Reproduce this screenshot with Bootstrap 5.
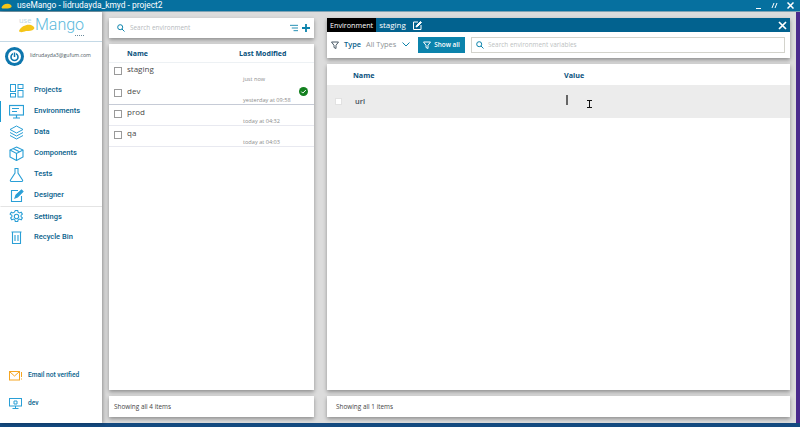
<!DOCTYPE html>
<html lang="en"><head><meta charset="utf-8">
<title>useMango</title>
<link rel="stylesheet" href="https://cdn.jsdelivr.net/npm/bootstrap@5.3.0/dist/css/bootstrap.min.css">
<style>
html,body{height:427px;overflow:hidden;}
body{background:#dcdcdc;font-family:"Open Sans","Noto Sans",sans-serif;color:#333;font-size:8px;}
.app-root{width:800px;height:427px;}
.title-bar{height:12px;background:#06709f;border-bottom:1px solid #7fa3b4;color:#fff;font-family:Roboto,sans-serif;font-size:8.4px;line-height:11px;padding-right:2px;flex:none;}
.title-logo{width:11px;height:6px;margin:0 5px 0 1px;}
.win-btn{width:16px;display:flex;align-items:center;justify-content:center;}
.win-btn svg{width:7px;height:7px;}
.mid-area{min-height:0;flex:1;}
.side-bar{width:102px;background:#fff;flex:none;box-shadow:1px 0 4px rgba(0,0,0,.35);z-index:1;}
.logo-box{height:30px;border-bottom:1px solid #c4d9e6;padding-left:19px;padding-bottom:4px;}
.logo-use{color:#bcd7e4;font-size:7.5px;line-height:8px;width:16px;height:17px;}
.logo-use svg{left:0;top:8px;}
.logo-word{color:#5bb9dc;font-family:Roboto,sans-serif;font-size:16px;line-height:18px;font-weight:300;position:relative;}
.logo-dots{position:absolute;right:0;bottom:-2px;width:9px;border-top:1px dotted #6a8a9c;}
.user-row{height:28px;font-size:5.2px;color:#4c5b64;padding-left:5px;gap:6px;margin-bottom:9.5px;}
.nav-row{height:21px;padding-left:8px;gap:10px;color:#07618c;font-family:Roboto,sans-serif;font-size:7.5px;font-weight:500;border-left:1px solid transparent;}
.nav-row svg{width:15px;height:15px;flex:none;}
.nav-on{border-left-color:#1a9ad0;}
.nav-split{border-top:1px solid #e4e4e4;}
.side-foot{height:21px;padding-left:9px;gap:6px;color:#07618c;font-family:Roboto,sans-serif;font-size:6.6px;font-weight:500;}
.side-gap{height:7px;}
.foot-last{margin-bottom:9px;}
.stage{padding:6px 10px 6px 7px;gap:13px;min-width:0;position:relative;}
.stage-end{width:4px;background:#4a2a8c;flex:none;}
.left-col{width:205px;flex:none;gap:6px;}
.right-col{width:463px;flex:none;gap:6px;}
.panel{background:#fff;box-shadow:0 2px 4px rgba(0,0,0,.35);}
.search-card{height:20px;padding:0 4px 0 8px;color:#b5b9bc;font-size:6.4px;}
.search-card svg{width:8px;height:8px;margin-right:5px;flex:none;}
.list-card{flex:1;min-height:0;}
.foot-card{height:21px;flex:none;padding-left:9px;font-size:6.4px;color:#444;}
.foot-tight{padding-left:5px;}
.list-head{height:19px;padding-top:2px;color:#07507c;font-size:7px;font-weight:700;border-bottom:1px solid #edf1f4;}
.head-name{padding-left:18px;width:130px;}
.env-row{height:21px;position:relative;color:#4a4a4a;font-size:8px;padding-top:1px;border-bottom:1px solid #e8e9f0;padding-left:5px;}
.env-first{padding-top:0;}
.env-line{border-bottom-color:#c6cbd6;}
.env-none{border-bottom-color:transparent;}
.tick-box{width:8px;height:8px;border:1px solid #9a9a9a;background:#fff;margin-right:5px;flex:none;margin-top:-1px;}
.env-date{position:absolute;left:134px;bottom:0;font-size:5.6px;color:#8c8c8c;}
.env-ok{position:absolute;right:6px;top:3px;width:9px;height:9px;}
.blue-head{height:14px;background:#02628f;color:#fff;font-size:8px;}
.black-tag{background:#000;height:14px;padding:0 3px;font-size:7.2px;line-height:14px;margin-right:3px;}
.edit-mark{width:9px;height:9px;margin-left:7px;}
.close-mark{width:9px;height:9px;margin-left:auto;margin-right:3px;}
.tool-row{height:26px;padding:0 4px;}
.tool-row svg.fun{width:8px;height:8px;flex:none;}
.type-lab{color:#07618c;font-size:7.4px;font-weight:600;margin-left:5px;}
.type-sel{color:#8d9296;font-size:7.4px;margin-left:5px;width:44px;margin-right:8px;}
.show-btn{background:#0b83ac;color:#fff;font-size:6.4px;font-weight:600;height:16px;width:47px;border-radius:0;padding:0;gap:3px;--bs-btn-color:#fff;--bs-btn-bg:#0b83ac;--bs-btn-border-color:#0b83ac;}
.search-wide{height:16px;flex:1;border:1px solid #d3d3cc;margin-left:6px;margin-right:1px;color:#bcbfc2;font-size:6.4px;padding-left:4px;}
.search-wide svg{width:8px;height:8px;margin-right:4px;}
.table-card{flex:1;min-height:0;}
.tab-head{height:21px;padding-top:1px;color:#07507c;font-size:7.2px;font-weight:700;}
.col-one{width:237px;padding-left:26px;flex:none;}
.tab-row{height:33px;background:#ececec;color:#3d4a55;font-size:7.4px;font-weight:600;position:relative;}
.tab-check{width:7px;height:7px;background:#fff;border:1px solid #e2e2e2;margin-left:8px;margin-right:13px;flex:none;}
.tab-name{width:211px;flex:none;}
.caret-bar{width:2px;height:10px;background:#666;margin-top:-3px;}
.i-beam{position:absolute;left:260px;top:15px;width:5px;height:8px;}
.base-strip{height:4px;background:#144a80;flex:none;}
</style></head>
<body>
<div class="app-root d-flex flex-column">
  <div class="title-bar d-flex align-items-center">
    <svg class="title-logo" viewBox="0 0 22 12"><path d="M1 9C3 3 10 0 16 2c4 1 6 4 5 6-2 3-7 3-11 3-4 0-8 1-9-2z" fill="#f5c518"/></svg>
    <span>useMango - lidrudayda_kmyd - project2</span>
    <span class="win-btn ms-auto"><svg viewBox="0 0 7 7" stroke="#fff"><path d="M1 6.500h5"/></svg></span>
    <span class="win-btn"><svg viewBox="0 0 7 7" stroke="#fff"><path d="M1 6l2-5M4 6l2-5"/></svg></span>
    <span class="win-btn"><svg viewBox="0 0 7 7" stroke="#fff" stroke-width="1.500"><path d="M.5 .5l6 6M6.500 .5l-6 6"/></svg></span>
  </div>
  <div class="mid-area d-flex">
    <aside class="side-bar d-flex flex-column">
      <div class="logo-box d-flex align-items-center">
        <div class="position-relative logo-use">use
          <svg class="position-absolute" width="16" height="9" viewBox="0 0 16 9"><path d="M0 7C2 2 8 0 12 1c3 1 4 3 3 4-2 2-5 2-8 2-3 1-6 2-7 0z" fill="#f5c518"/></svg>
        </div>
        <div class="logo-word">Mango<span class="logo-dots"></span></div>
      </div>
      <div class="user-row d-flex align-items-center">
        <svg width="19" height="19" viewBox="0 0 19 19"><circle cx="9.500" cy="9.500" r="9.500" fill="#0d76ad"/><circle cx="9.500" cy="9.500" r="6.500" fill="#fff"/><circle cx="9.500" cy="10" r="3.500" fill="none" stroke="#0d76ad" stroke-width="1.600"/><path d="M9.500 5v5" stroke="#fff" stroke-width="3"/><path d="M9.500 5.500v4.500" stroke="#0d76ad" stroke-width="1.500"/></svg>
        <span>lidrudayda3@gufum.com</span>
      </div>
      <div>
        <div class="nav-row d-flex align-items-center"><svg viewBox="0 0 15 15" fill="none" stroke="#2a9fd6" stroke-width="1"><rect x="1.500" y="1.500" width="5" height="7"/><rect x="9" y="1.500" width="5" height="4"/><rect x="1.500" y="10.500" width="5" height="3.500"/><rect x="9" y="7.500" width="5" height="6.500"/></svg>Projects</div>
        <div class="nav-row nav-on d-flex align-items-center"><svg viewBox="0 0 15 15" fill="none" stroke="#2a9fd6" stroke-width="1.200"><rect x="0.500" y="1.500" width="14" height="9.500"/><path d="M3 4.500h7M3 7.500h5M7.500 11v2.500M4 14h7"/></svg>Environments</div>
        <div class="nav-row d-flex align-items-center"><svg viewBox="0 0 15 15" fill="none" stroke="#2a9fd6" stroke-width="1"><path d="M7.500 1 14 4.500 7.500 8 1 4.500z"/><path d="M1 7.500 7.500 11 14 7.500M1 10.500 7.500 14 14 10.500"/></svg>Data</div>
        <div class="nav-row d-flex align-items-center"><svg viewBox="0 0 15 15" fill="none" stroke="#2a9fd6" stroke-width="1.100"><path d="M7.500 1 14 4v7l-6.500 3.500L1 11V4z"/><path d="M1 4l6.500 3.500L14 4M7.500 7.500v7M4 2.500l6.500 3.300"/></svg>Components</div>
        <div class="nav-row d-flex align-items-center"><svg viewBox="0 0 15 15" fill="none" stroke="#2a9fd6" stroke-width="1.100"><path d="M5.500 1.500h4M6 1.500v4.500L1.500 13c-.4.8 0 1.500 1 1.500h10c1 0 1.400-.7 1-1.500L9 6V1.500"/></svg>Tests</div>
        <div class="nav-row d-flex align-items-center"><svg viewBox="0 0 15 15" fill="none" stroke="#2a9fd6" stroke-width="1.100"><path d="M9 2.500H2.500v11h10V8"/><path d="M6 10l1-3 5.500-5 1.500 1.500L8.500 9z" fill="#2a9fd6"/></svg>Designer</div>
        <div class="nav-row nav-split d-flex align-items-center"><svg viewBox="0 0 15 15" fill="none" stroke="#2a9fd6" stroke-width="1.100"><circle cx="7.500" cy="7.500" r="2.200"/><path d="M6.300 1.500h2.400l.4 1.700 1.500.7 1.600-.8 1.200 2-1.300 1.100v1.600l1.300 1.100-1.200 2-1.600-.8-1.500.7-.4 1.700H6.300l-.4-1.700-1.500-.7-1.600.8-1.200-2 1.300-1.100V6.200L1.100 5.100l1.200-2 1.600.8 1.500-.7z"/></svg>Settings</div>
        <div class="nav-row d-flex align-items-center"><svg viewBox="0 0 15 15" fill="none" stroke="#2a9fd6" stroke-width="1.100"><path d="M2.500 2h10M3.500 2v11.500h8V2M6 5v6M9 5v6"/></svg>Recycle Bin</div>
      </div>
      <div class="flex-grow-1"></div>
      <div class="side-foot d-flex align-items-center"><svg width="13" height="10" viewBox="0 0 13 10" fill="none" stroke="#f5a623"><rect x="0.500" y="0.500" width="10" height="8.500"/><path d="M1 1l4.500 4L10 1"/><path d="M12.500 1v5M12.500 7.500v1" stroke-width="1"/></svg>Email not verified</div>
      <div class="side-gap"></div>
      <div class="side-foot foot-last d-flex align-items-center"><svg width="13" height="11" viewBox="0 0 13 11" fill="none" stroke="#2a9fd6"><rect x="0.500" y="0.500" width="12" height="7.500"/><path d="M6.500 8v2M3.500 10.500h6M5 3h3v3H5z"/></svg>dev</div>
    </aside>
    <main class="stage d-flex flex-grow-1">
      <div class="left-col d-flex flex-column">
        <div class="panel search-card d-flex align-items-center">
          <svg viewBox="0 0 8 8" fill="none" stroke="#0b83ac"><circle cx="3.200" cy="3.200" r="2.500"/><path d="M5 5l2.500 2.500"/></svg>
          <span>Search environment</span>
          <svg class="ms-auto me-1" viewBox="0 0 9 8" fill="none" stroke="#0b83ac"><path d="M0 1h9M2 4h7M4 7h5"/></svg>
          <svg class="m-0" viewBox="0 0 8 8" fill="none" stroke="#0b83ac" stroke-width="1.800"><path d="M4 0v8M0 4h8"/></svg>
        </div>
        <div class="panel list-card">
          <div class="list-head d-flex align-items-center"><span class="head-name">Name</span><span>Last Modified</span></div>
          <div class="env-row env-first env-none d-flex align-items-start"><span class="tick-box mt-1"></span>staging<span class="env-date">just now</span></div>
          <div class="env-row env-line d-flex align-items-start"><span class="tick-box mt-1"></span>dev<span class="env-date">yesterday at 09:58</span>
            <svg class="env-ok" viewBox="0 0 9 9"><circle cx="4.500" cy="4.500" r="4.500" fill="#13801f"/><path d="M2.300 4.600l1.500 1.500 3-3" fill="none" stroke="#fff"/></svg></div>
          <div class="env-row d-flex align-items-start"><span class="tick-box mt-1"></span>prod<span class="env-date">today at 04:32</span></div>
          <div class="env-row d-flex align-items-start"><span class="tick-box mt-1"></span>qa<span class="env-date">today at 04:03</span></div>
        </div>
        <div class="panel foot-card foot-tight d-flex align-items-center">Showing all 4 items</div>
      </div>
      <div class="right-col d-flex flex-column">
        <div class="panel">
          <div class="blue-head d-flex align-items-center">
            <span class="black-tag">Environment</span><span>staging</span>
            <svg class="edit-mark" viewBox="0 0 9 9" fill="none" stroke="#fff"><path d="M5 1H.5v7.500H8V4"/><path d="M3 6l.5-1.500L7.500.5 8.500 1.500l-4 4z" fill="#fff"/></svg>
            <svg class="close-mark" viewBox="0 0 9 9" stroke="#fff" stroke-width="1.700"><path d="M1 1l7 7M8 1l-7 7"/></svg>
          </div>
          <div class="tool-row d-flex align-items-center">
            <svg class="fun" viewBox="0 0 8 8" fill="none" stroke="#4a5a66"><path d="M.5 1h7L5 4.300V7.500L3 6.500V4.300z"/></svg>
            <span class="type-lab">Type</span>
            <span class="type-sel d-flex align-items-center">All Types
              <svg class="ms-auto" width="8" height="5" viewBox="0 0 8 5" fill="none" stroke="#0b83ac"><path d="M.5.500 4 4 7.500.5"/></svg></span>
            <button type="button" class="btn show-btn d-flex align-items-center justify-content-center"><svg class="fun" viewBox="0 0 8 8" fill="none" stroke="#fff"><path d="M.5 1h7L5 4.300V7.500L3 6.500V4.300z"/></svg>Show all</button>
            <div class="search-wide d-flex align-items-center"><svg viewBox="0 0 8 8" fill="none" stroke="#0b83ac"><circle cx="3.200" cy="3.200" r="2.500"/><path d="M5 5l2.500 2.500"/></svg>Search environment variables</div>
          </div>
        </div>
        <div class="panel table-card">
          <div class="tab-head d-flex align-items-center"><span class="col-one">Name</span><span>Value</span></div>
          <div class="tab-row d-flex align-items-center"><span class="tab-check"></span><span class="tab-name">url</span><span class="caret-bar"></span>
            <svg class="i-beam" viewBox="0 0 5 8" fill="none" stroke="#111"><path d="M0 .5h5M0 7.500h5M2.500 .5v7"/></svg></div>
        </div>
        <div class="panel foot-card d-flex align-items-center">Showing all 1 items</div>
      </div>
    </main>
    <div class="stage-end"></div>
  </div>
  <div class="base-strip"></div>
</div>
<script src="https://cdn.jsdelivr.net/npm/bootstrap@5.3.0/dist/js/bootstrap.bundle.min.js"></script>
</body></html>
